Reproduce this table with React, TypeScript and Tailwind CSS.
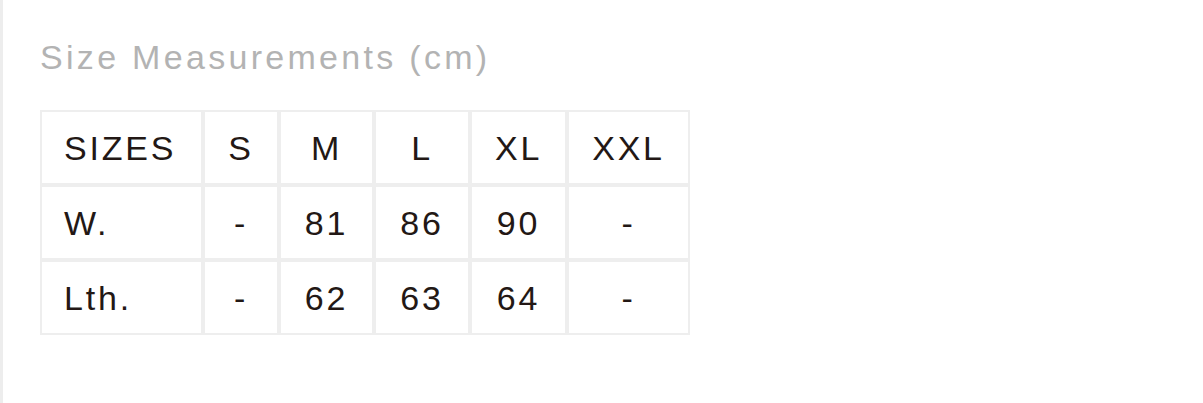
const sizes = ["S", "M", "L", "XL", "XXL"]

const rows = [
    { label: "W.", values: ["-", "81", "86", "90", "-"] },
    { label: "Lth.", values: ["-", "62", "63", "64", "-"] },
]

const cell = "border-2 border-[#eeeeee] h-[75px] text-center align-middle"

export default function App() {
    return (
        <div className="w-[1203px] h-[403px] bg-white border-l-[3px] border-[#ededed] font-['Liberation_Sans',Arial,sans-serif] overflow-hidden">
            <div className="pl-[37px] pt-[40px]">
                <h2 className="text-[34px] leading-none tracking-[3.3px] text-[#b3b3b3]">
                    Size Measurements (cm)
                </h2>
                <table className="mt-[36px] table-fixed border-separate border-spacing-0 w-[650px] text-[34px] leading-none tracking-[2.8px] text-[#231815]">
                    <colgroup>
                        <col className="w-[163px]" />
                        <col className="w-[76px]" />
                        <col className="w-[95px]" />
                        <col className="w-[96px]" />
                        <col className="w-[97px]" />
                        <col className="w-[123px]" />
                    </colgroup>
                    <thead>
                        <tr>
                            <th className={`${cell} !text-left pl-[22px] font-normal`}>SIZES</th>
                            {sizes.map((s) => (
                                <th key={s} className={`${cell} font-normal`}>{s}</th>
                            ))}
                        </tr>
                    </thead>
                    <tbody>
                        {rows.map((r) => (
                            <tr key={r.label}>
                                <td className={`${cell} !text-left pl-[22px]`}>{r.label}</td>
                                {r.values.map((v, i) => (
                                    <td key={i} className={cell}>{v}</td>
                                ))}
                            </tr>
                        ))}
                    </tbody>
                </table>
            </div>
        </div>
    )
}
